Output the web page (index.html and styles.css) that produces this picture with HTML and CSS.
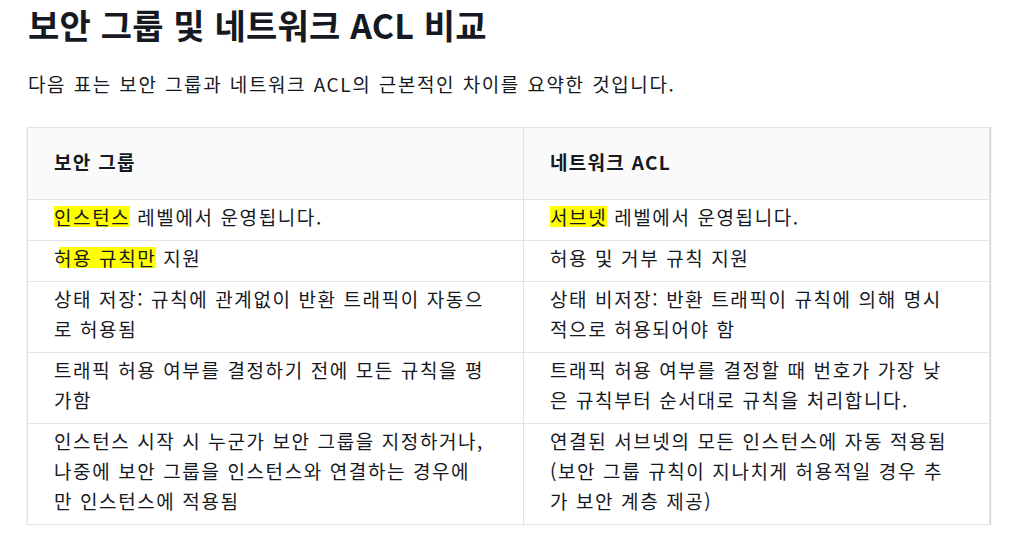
FILE: index.html
```html
<!DOCTYPE html>
<html lang="ko">
<head>
<meta charset="utf-8">
<title>보안 그룹 및 네트워크 ACL 비교</title>
<link rel="stylesheet" href="styles.css">
</head>
<body>
<main class="page">
  <h1 class="title">보안 그룹 및 네트워크 ACL 비교</h1>
  <p class="intro">다음 표는 보안 그룹과 네트워크 ACL의 근본적인 차이를 요약한 것입니다.</p>
  <div class="table-wrap">
    <table class="compare">
      <colgroup>
        <col class="col-a">
        <col class="col-b">
      </colgroup>
      <thead>
        <tr>
          <th class="cell-a">보안 그룹</th>
          <th class="cell-b">네트워크 ACL</th>
        </tr>
      </thead>
      <tbody>
        <tr>
          <td class="cell-a"><mark class="hl">인스턴스</mark> 레벨에서 운영됩니다.</td>
          <td class="cell-b"><mark class="hl">서브넷</mark> 레벨에서 운영됩니다.</td>
        </tr>
        <tr>
          <td class="cell-a"><mark class="hl hl-offset">허용 규칙만</mark> 지원</td>
          <td class="cell-b">허용 및 거부 규칙 지원</td>
        </tr>
        <tr>
          <td class="cell-a">상태 저장: 규칙에 관계없이 반환 트래픽이 자동으로 허용됨</td>
          <td class="cell-b">상태 비저장: 반환 트래픽이 규칙에 의해 명시적으로 허용되어야 함</td>
        </tr>
        <tr>
          <td class="cell-a">트래픽 허용 여부를 결정하기 전에 모든 규칙을 평가함</td>
          <td class="cell-b">트래픽 허용 여부를 결정할 때 번호가 가장 낮은 규칙부터 순서대로 규칙을 처리합니다.</td>
        </tr>
        <tr>
          <td class="cell-a">인스턴스 시작 시 누군가 보안 그룹을 지정하거나, 나중에 보안 그룹을 인스턴스와 연결하는 경우에<br>만 인스턴스에 적용됨</td>
          <td class="cell-b">연결된 서브넷의 모든 인스턴스에 자동 적용됨(보안 그룹 규칙이 지나치게 허용적일 경우 추가 보안 계층 제공)</td>
        </tr>
      </tbody>
    </table>
  </div>
</main>
</body>
</html>
```

FILE: styles.css
```css
html, body {
  margin: 0;
  padding: 0;
  background: #ffffff;
}

body {
  font-family: "Noto Sans CJK KR", "Noto Sans", sans-serif;
  color: #16191f;
}

.page {
  padding: 0 0 0 27px;
}

.title {
  margin: 0;
  padding: 4px 0 0 1px;
  font-size: 34px;
  line-height: 42px;
  font-weight: 700;
  letter-spacing: 0.2px;
}

.intro {
  margin: 24px 0 0;
  padding-left: 1px;
  font-size: 19px;
  line-height: 28px;
  letter-spacing: 1.6px;
  word-spacing: 0.6px;
}

.table-wrap {
  margin-top: 29px;
  width: 962px;
  box-shadow: 1px 1px 1px 0 rgba(0, 28, 36, 0.3), 2px 0 1px 0 rgba(0, 28, 36, 0.12), 0 1px 1px 0 rgba(0, 28, 36, 0.25);
}

.compare {
  width: 962px;
  border-collapse: collapse;
  table-layout: fixed;
  border: 1px solid #e1e4e4;
}

.col-a { width: 496px; }
.col-b { width: 466px; }

.compare th,
.compare td {
  text-align: left;
  vertical-align: top;
  border: 1px solid #e1e4e4;
  padding: 2px 31px 8px 26px;
  font-size: 19px;
  line-height: 30px;
  letter-spacing: 1.6px;
}

.compare .cell-b {
  padding-right: 41px;
}

.compare th {
  background: #fafafa;
  font-weight: 700;
  padding-top: 19px;
  padding-bottom: 22px;
  letter-spacing: 1.3px;
}

.hl {
  color: inherit;
  background-color: transparent;
  background-image: linear-gradient(#ffff00, #ffff00);
  background-repeat: no-repeat;
  background-size: 100% 21px;
  background-position: left 0 top 3px;
}

.hl-offset {
  background-size: calc(100% - 5px) 21px;
  background-position: right 0 top 3px;
}
```
